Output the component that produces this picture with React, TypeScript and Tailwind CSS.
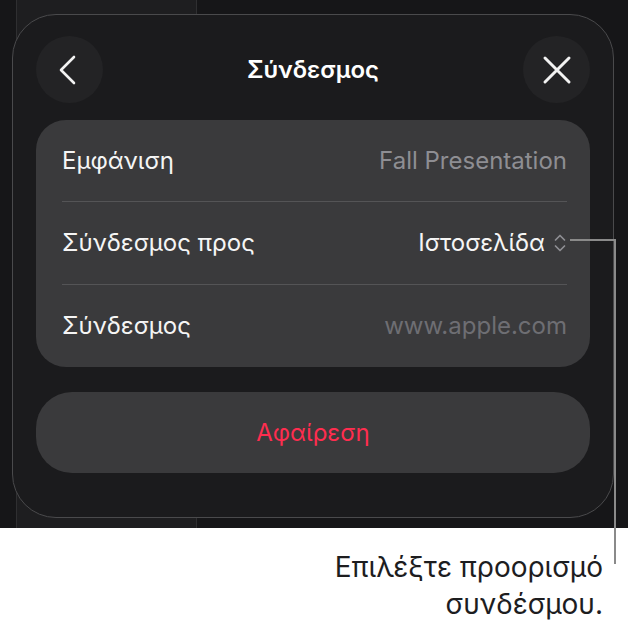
import React from "react";

function ChevronLeft() {
  return (
    <svg width="18" height="30" viewBox="0 0 18 30" fill="none">
      <path d="M15 2 L2 15 L15 28" stroke="#f2f2f2" strokeWidth="2.6" strokeLinecap="round" strokeLinejoin="round" />
    </svg>
  );
}

function CloseIcon() {
  return (
    <svg width="30" height="30" viewBox="0 0 30 30" fill="none">
      <path d="M3 3 L27 27 M27 3 L3 27" stroke="#f2f2f2" strokeWidth="3" strokeLinecap="round" />
    </svg>
  );
}

function UpDown() {
  return (
    <svg width="14" height="22" viewBox="0 0 14 22" fill="none">
      <path d="M2.5 8 L7 3.5 L11.5 8 M2.5 14 L7 18.5 L11.5 14" stroke="#8e8e93" strokeWidth="1.7" strokeLinecap="round" strokeLinejoin="round" />
    </svg>
  );
}

export default function App() {
  return (
    <div className="w-[628px] h-[620px] bg-white relative overflow-hidden font-['Inter',sans-serif]">
      {/* screenshot area */}
      <div className="h-[528px] bg-[#161618] relative overflow-hidden flex">
        <div className="w-[16px]" />
        <div className="w-[181px] h-full bg-[#1e1e20] border-x border-[#2f2f31]" />

        {/* sheet */}
        <div className="absolute left-[12px] top-[14px] w-[602px] h-[504px] rounded-[44px] border border-[#4a4a4c] bg-[#1b1b1d] px-[23px] pt-[21px]">
          <div className="flex items-center justify-between h-[67px]">
            <button className="w-[67px] h-[67px] rounded-full bg-[#232325] flex items-center justify-center pr-[3px]">
              <ChevronLeft />
            </button>
            <div className="text-[24px] font-semibold text-white">Σύνδεσμος</div>
            <button className="w-[67px] h-[67px] rounded-full bg-[#232325] flex items-center justify-center">
              <CloseIcon />
            </button>
          </div>

          <div className="mt-[17px] rounded-[30px] bg-[#3a3a3c] pl-[26px] pr-[23px]">
            <div className="h-[82px] flex items-center justify-between border-b border-[#545456]">
              <span className="text-[24px] text-[#f5f5f5]">Εμφάνιση</span>
              <span className="text-[24px] text-[#8e8e93]">Fall Presentation</span>
            </div>
            <div className="h-[83px] flex items-center justify-between border-b border-[#545456]">
              <span className="text-[24px] text-[#f5f5f5]">Σύνδεσμος προς</span>
              <span className="flex items-center gap-[8px] text-[24px] text-[#f5f5f5]">
                Ιστοσελίδα
                <UpDown />
              </span>
            </div>
            <div className="h-[82px] flex items-center justify-between">
              <span className="text-[24px] text-[#f5f5f5]">Σύνδεσμος</span>
              <span className="text-[24px] text-[#6e6e73]">www.apple.com</span>
            </div>
          </div>

          <button className="mt-[25px] w-full h-[81px] rounded-[36px] bg-[#3a3a3c] flex items-center justify-center text-[24px] text-[#ff2d4f]">
            Αφαίρεση
          </button>
        </div>
      </div>

      {/* callout */}
      <div className="absolute left-[570px] top-[239px] w-[46px] h-[2px] bg-[#8a8a8a]" />
      <div className="absolute left-[614px] top-[239px] w-[2px] h-[325px] bg-[#8a8a8a]" />
      <div className="pr-[25px] pt-[21px] text-right text-[28px] leading-[37px] text-[#1d1d1f]">
        <div>Επιλέξτε προορισμό</div>
        <div>συνδέσμου.</div>
      </div>
    </div>
  );
}
